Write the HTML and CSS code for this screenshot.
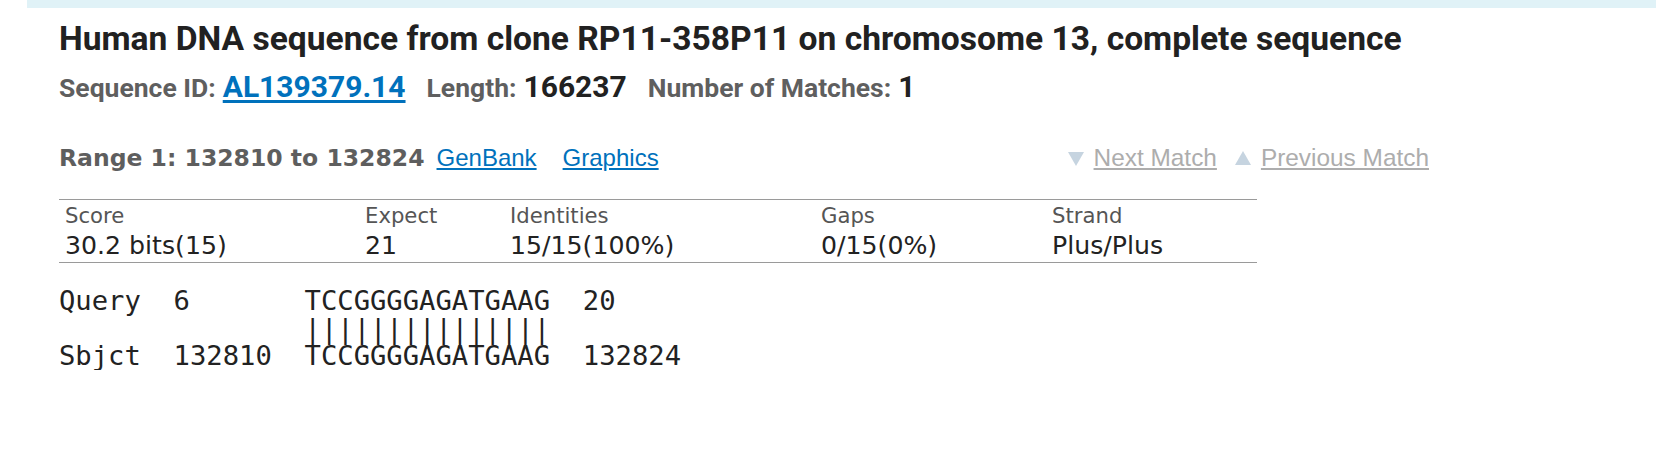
FILE: index.html
```html
<!DOCTYPE html>
<html>
<head>
<meta charset="utf-8">
<link rel="stylesheet" href="styles.css">
</head>
<body>
<div class="topbar"></div>
<div class="content">
  <h1 class="title">Human DNA sequence from clone RP11-358P11 on chromosome 13, complete sequence</h1>
  <div class="seqinfo">
    <span class="lbl">Sequence ID:</span>
    <a class="seqlink" href="#">AL139379.14</a>
    <span class="lbl gap">Length:</span>
    <span class="val">166237</span>
    <span class="lbl gap">Number of Matches:</span>
    <span class="val">1</span>
  </div>
  <div class="rangebar">
    <div class="range-left">
      <span class="range">Range 1: 132810 to 132824</span>
      <a class="tlink" href="#">GenBank</a>
      <a class="tlink" href="#">Graphics</a>
    </div>
    <div class="nav">
      <svg class="tri" width="16" height="15" viewBox="0 0 16 15"><path d="M0 1 L16 1 L8 15 Z" fill="#c6d4e0"/></svg>
      <a class="navlink" href="#">Next Match</a>
      <svg class="tri" width="16" height="15" viewBox="0 0 16 15"><path d="M0 14 L16 14 L8 0 Z" fill="#c6d4e0"/></svg>
      <a class="navlink last" href="#">Previous Match</a>
    </div>
  </div>
  <table class="stats">
    <tr class="hdr">
      <td class="c1">Score</td>
      <td class="c2">Expect</td>
      <td class="c3">Identities</td>
      <td class="c4">Gaps</td>
      <td class="c5">Strand</td>
    </tr>
    <tr class="vals">
      <td>30.2 bits(15)</td>
      <td>21</td>
      <td>15/15(100%)</td>
      <td>0/15(0%)</td>
      <td>Plus/Plus</td>
    </tr>
  </table>
  <pre class="aln">Query  6       TCCGGGGAGATGAAG  20
               |||||||||||||||
Sbjct  132810  TCCGGGGAGATGAAG  132824</pre>
</div>
</body>
</html>
```

FILE: styles.css
```css
html, body {
  margin: 0;
  padding: 0;
  background: #ffffff;
}

.topbar {
  margin-left: 27px;
  height: 8px;
  background: #e0f2f7;
}

.content {
  padding-left: 59px;
}

.title {
  margin: 12px 0 0 0;
  font-family: Roboto, "Liberation Sans", sans-serif;
  font-weight: 700;
  font-size: 33.6px;
  line-height: 38px;
  color: #212121;
}

.seqinfo {
  margin-top: 11px;
  height: 36px;
  display: flex;
  align-items: baseline;
  font-family: Roboto, "Liberation Sans", sans-serif;
  font-weight: 700;
  font-size: 26.5px;
  line-height: 36px;
  color: #5f5f5f;
}

.seqinfo .lbl {
  margin-right: 7px;
}

.seqinfo .gap {
  margin-left: 21px;
}

.seqlink {
  font-size: 30px;
  color: #0071bc;
  text-decoration: underline;
  text-underline-offset: 3px;
}

.val {
  font-size: 30px;
  color: #212121;
}

.rangebar {
  width: 1370px;
  height: 30px;
  margin-top: 38px;
  display: flex;
  justify-content: space-between;
  align-items: center;
  line-height: 30px;
}

.range-left {
  display: flex;
  align-items: baseline;
}

.range {
  font-family: "DejaVu Sans", Verdana, sans-serif;
  font-weight: 700;
  font-size: 23.5px;
  color: #5e5e5e;
  margin-right: 12px;
}

.tlink {
  font-family: "Liberation Sans", Arial, sans-serif;
  font-size: 24px;
  color: #0071bc;
  text-decoration: underline;
  margin-right: 26px;
}

.nav {
  display: flex;
  align-items: center;
  font-family: "Liberation Sans", Arial, sans-serif;
  font-size: 24.4px;
}

.tri {
  display: block;
  margin-right: 10px;
}

.navlink {
  color: #adadad;
  text-decoration: underline;
  margin-right: 18px;
}

.navlink.last {
  margin-right: 0;
}

.stats {
  margin-top: 26px;
  width: 1198px;
  border-collapse: collapse;
  border-top: 1px solid #9a9a9a;
  border-bottom: 1px solid #9a9a9a;
  font-family: "DejaVu Sans", Verdana, sans-serif;
}

.stats td {
  padding: 0 0 0 6px;
  vertical-align: baseline;
}

.hdr td {
  font-size: 21.2px;
  color: #555555;
  line-height: 26px;
  padding-top: 3px;
}

.vals td {
  font-size: 25.2px;
  color: #222222;
  line-height: 30px;
  padding-top: 2px;
  padding-bottom: 1px;
}

.c1 { width: 294px; }
.c2 { width: 139px; }
.c3 { width: 305px; }
.c4 { width: 225px; }

.aln {
  margin: 24px 0 0 0;
  font-family: "DejaVu Sans Mono", "Liberation Mono", monospace;
  font-size: 27.2px;
  line-height: 27.5px;
  color: #222222;
}
```
